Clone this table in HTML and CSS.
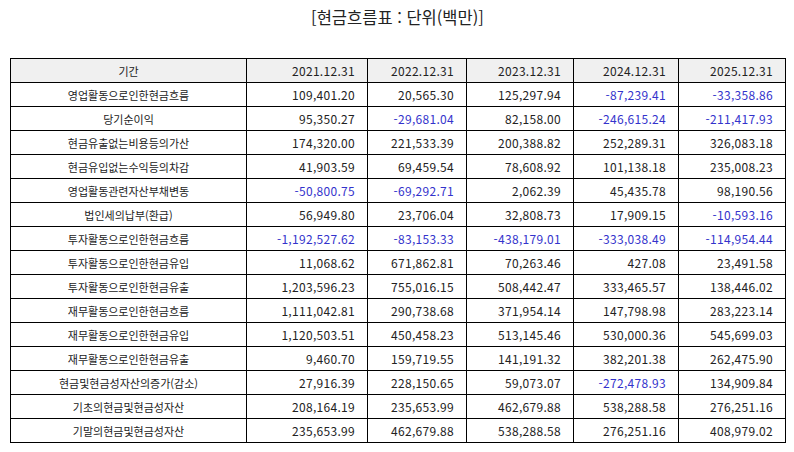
FILE: index.html
```html
<!DOCTYPE html>
<html lang="ko">
<head>
<meta charset="utf-8">
<link rel="stylesheet" href="styles.css">
</head>
<body>
<div class="page">
  <h1 class="title">[현금흐름표 : 단위(백만)]</h1>
  <table class="cf">
    <colgroup>
      <col class="c0"><col class="c1"><col class="c2"><col class="c3"><col class="c4"><col class="c5">
    </colgroup>
    <thead>
      <tr><th class="lbl">기간</th><th>2021.12.31</th><th>2022.12.31</th><th>2023.12.31</th><th>2024.12.31</th><th>2025.12.31</th></tr>
    </thead>
    <tbody>
      <tr><td class="lbl">영업활동으로인한현금흐름</td><td>109,401.20</td><td>20,565.30</td><td>125,297.94</td><td class="neg">-87,239.41</td><td class="neg">-33,358.86</td></tr>
      <tr><td class="lbl">당기순이익</td><td>95,350.27</td><td class="neg">-29,681.04</td><td>82,158.00</td><td class="neg">-246,615.24</td><td class="neg">-211,417.93</td></tr>
      <tr><td class="lbl">현금유출없는비용등의가산</td><td>174,320.00</td><td>221,533.39</td><td>200,388.82</td><td>252,289.31</td><td>326,083.18</td></tr>
      <tr><td class="lbl">현금유입없는수익등의차감</td><td>41,903.59</td><td>69,459.54</td><td>78,608.92</td><td>101,138.18</td><td>235,008.23</td></tr>
      <tr><td class="lbl">영업활동관련자산부채변동</td><td class="neg">-50,800.75</td><td class="neg">-69,292.71</td><td>2,062.39</td><td>45,435.78</td><td>98,190.56</td></tr>
      <tr><td class="lbl">법인세의납부(환급)</td><td>56,949.80</td><td>23,706.04</td><td>32,808.73</td><td>17,909.15</td><td class="neg">-10,593.16</td></tr>
      <tr><td class="lbl">투자활동으로인한현금흐름</td><td class="neg">-1,192,527.62</td><td class="neg">-83,153.33</td><td class="neg">-438,179.01</td><td class="neg">-333,038.49</td><td class="neg">-114,954.44</td></tr>
      <tr><td class="lbl">투자활동으로인한현금유입</td><td>11,068.62</td><td>671,862.81</td><td>70,263.46</td><td>427.08</td><td>23,491.58</td></tr>
      <tr><td class="lbl">투자활동으로인한현금유출</td><td>1,203,596.23</td><td>755,016.15</td><td>508,442.47</td><td>333,465.57</td><td>138,446.02</td></tr>
      <tr><td class="lbl">재무활동으로인한현금흐름</td><td>1,111,042.81</td><td>290,738.68</td><td>371,954.14</td><td>147,798.98</td><td>283,223.14</td></tr>
      <tr><td class="lbl">재무활동으로인한현금유입</td><td>1,120,503.51</td><td>450,458.23</td><td>513,145.46</td><td>530,000.36</td><td>545,699.03</td></tr>
      <tr><td class="lbl">재무활동으로인한현금유출</td><td>9,460.70</td><td>159,719.55</td><td>141,191.32</td><td>382,201.38</td><td>262,475.90</td></tr>
      <tr><td class="lbl">현금및현금성자산의증가(감소)</td><td>27,916.39</td><td>228,150.65</td><td>59,073.07</td><td class="neg">-272,478.93</td><td>134,909.84</td></tr>
      <tr><td class="lbl">기초의현금및현금성자산</td><td>208,164.19</td><td>235,653.99</td><td>462,679.88</td><td>538,288.58</td><td>276,251.16</td></tr>
      <tr><td class="lbl">기말의현금및현금성자산</td><td>235,653.99</td><td>462,679.88</td><td>538,288.58</td><td>276,251.16</td><td>408,979.02</td></tr>
    </tbody>
  </table>
</div>
</body>
</html>
```

FILE: styles.css
```css
html, body {
  margin: 0;
  padding: 0;
  background: #ffffff;
}
body {
  font-family: "Noto Sans CJK KR", "Noto Sans", sans-serif;
  color: #222222;
}
.page {
  padding: 0 9px 0 10px;
}
.title {
  margin: 0;
  height: 58px;
  padding-top: 4px;
  box-sizing: border-box;
  font-size: 16.5px;
  font-weight: 400;
  line-height: 26px;
  text-align: center;
  color: #222222;
}
.cf {
  border-collapse: collapse;
  table-layout: fixed;
  width: 776px;
  border: 1.5px solid #000000;
  font-size: 11px;
}
.c0 { width: 236px; }
.c1 { width: 121px; }
.c2 { width: 99px; }
.c3 { width: 107px; }
.c4 { width: 105px; }
.c5 { width: 107px; }
.cf th, .cf td {
  border: 1px solid #000000;
  height: 23px;
  padding: 0 12px 0 2px;
  text-align: right;
  font-weight: 400;
  font-size: 12px;
  letter-spacing: 0.3px;
  line-height: 14px;
  white-space: nowrap;
  color: #222222;
}
.cf thead th {
  background: #f0f0f0;
}
.cf .lbl {
  text-align: center;
  padding: 0 4px;
  font-size: 11px;
  letter-spacing: 0;
}
.cf .neg {
  color: #3333cc;
}
```
